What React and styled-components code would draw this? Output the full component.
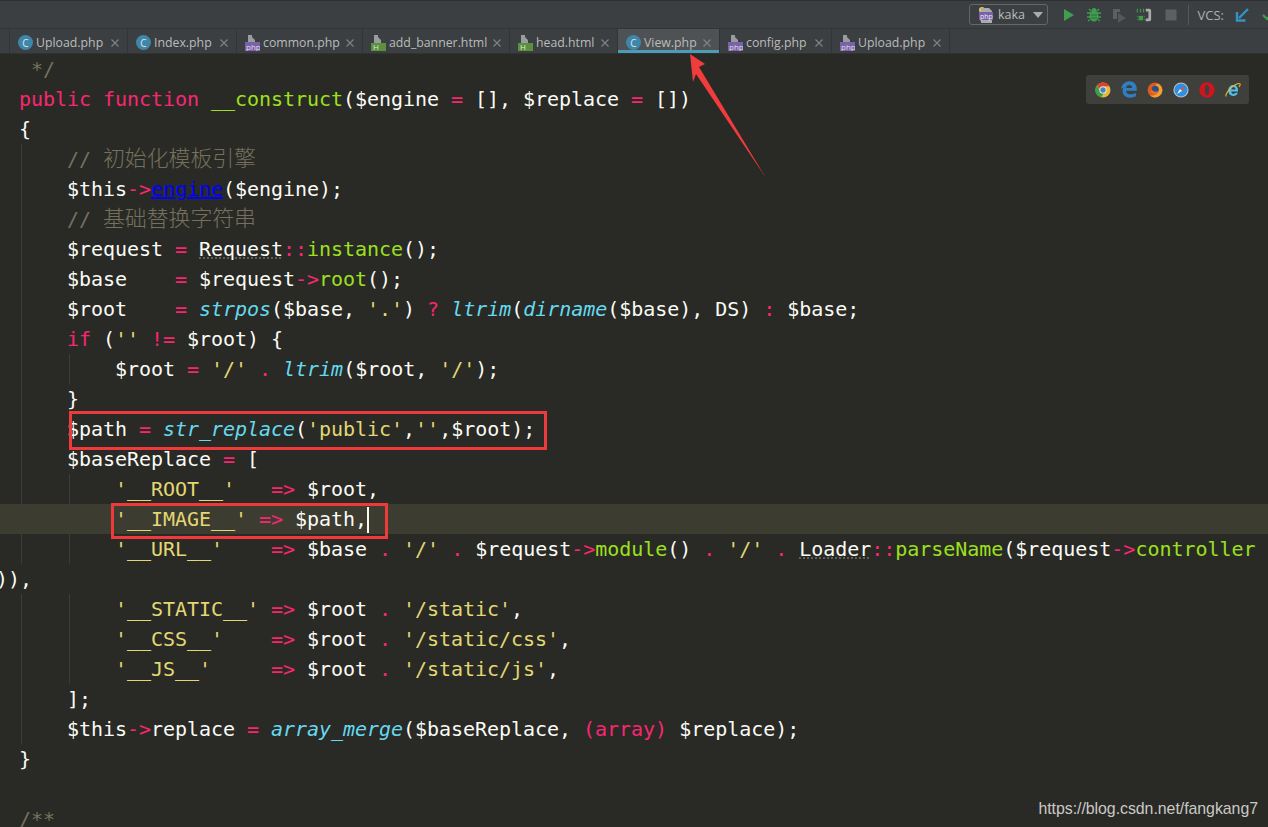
import React from "react";
import styled, { createGlobalStyle } from "styled-components";

const Global = createGlobalStyle`
  html, body { margin: 0; padding: 0; background: #292a25; }
  #root { width: 1268px; height: 827px; overflow: hidden; }
`;

const Page = styled.div`
  width: 1268px;
  height: 827px;
  display: flex;
  flex-direction: column;
  overflow: hidden;
  background: #292a25;
  font-family: "Open Sans", "Noto Sans", sans-serif;
`;

const Toolbar = styled.div`
  height: 29px;
  flex: none;
  box-sizing: border-box;
  border-top: 1px solid #2d2e30;
  background: #3c3f41;
  display: flex;
  align-items: center;
  justify-content: flex-end;
  border-bottom: 1px solid #333537;
`;

const RunConfig = styled.div`
  width: 79px;
  height: 21px;
  box-sizing: border-box;
  border: 1px solid #646669;
  border-radius: 3px;
  display: flex;
  align-items: center;
  padding-left: 7px;
  gap: 3px;
  color: #bbbbbb;
  font-size: 12.5px;
  margin-right: 9px;
`;

const Caret = styled.span`
  width: 0;
  height: 0;
  margin-left: 5px;
  border-left: 5px solid transparent;
  border-right: 5px solid transparent;
  border-top: 6px solid #a9abad;
`;

const ToolIcon = styled.span`
  width: 16px;
  height: 16px;
  margin: 0 ${(p) => p.$gap ?? 5}px;
  display: flex;
  flex: none;
`;

const Separator = styled.span`
  width: 1px;
  height: 20px;
  background: #55585a;
  margin: 0 9px 0 2.5px;
`;

const VcsLabel = styled.span`
  color: #a9b0b5;
  font-size: 13px;
  margin-right: 9px;
`;

const Overflowing = styled.span`
  display: flex;
  margin-right: -9px;
  margin-left: 10px;
  width: 16px;
`;

const TabBar = styled.div`
  height: 25px;
  flex: none;
  box-sizing: border-box;
  background: #3c3f41;
  padding-left: 9px;
  display: flex;
  border-bottom: 1px solid #323232;
`;

const Tab = styled.div`
  width: ${(p) => p.$w}px;
  box-sizing: border-box;
  flex: none;
  position: relative;
  display: flex;
  align-items: center;
  padding: 3px 8px 0 8px;
  border-left: 1px solid #323436;
  color: #bbbbbb;
  font-size: 12.3px;
  background: ${(p) => (p.$active ? "#4e5254" : "transparent")};
  &:last-child { border-right: 1px solid #323436; }
  ${(p) => p.$active && "box-shadow: inset 0 -3px 0 #4a9cb8;"}
`;

const TabName = styled.span`
  flex: 1;
  white-space: nowrap;
  margin-left: 3px;
`;

const Close = styled.span`
  width: 8px;
  height: 8px;
  display: flex;
  flex: none;
`;

const ClassBadge = styled.span`
  width: 15px;
  height: 15px;
  border-radius: 50%;
  background: #3f86a8;
  color: #d5e6ee;
  font-size: 10px;
  display: flex;
  align-items: center;
  justify-content: center;
  flex: none;
`;

const FileIcon = styled.span`
  width: 15px;
  height: 16px;
  flex: none;
  display: flex;
`;

const Editor = styled.div`
  flex: 1;
  position: relative;
  overflow: hidden;
  font-family: "DejaVu Sans Mono", monospace;
  font-size: 20px;
  letter-spacing: -0.04px;
  color: #fbfbf6;
`;

const guideImages = (g) => {
  const at = g || [];
  if (!at.length) return "none";
  return at
    .map(() => "linear-gradient(#3b3c37, #3b3c37)")
    .join(",");
};

const Line = styled.div`
  height: 30px;
  line-height: 30px;
  box-sizing: border-box;
  padding-left: ${(p) => p.$x ?? 19}px;
  margin-left: ${(p) => p.$shift ?? 0}px;
  white-space: pre;
  background-color: ${(p) => (p.$hl ? "#3c3c31" : "transparent")};
  background-image: ${(p) => guideImages(p.$guides)};
  background-repeat: no-repeat;
  background-size: 1px 100%;
  background-position: ${(p) => (p.$guides || []).map((x) => `${x}px 0`).join(",") || "0 0"};
`;

const palette = {
  kw: "#f92672",
  fn: "#9ce01e",
  call: "#66d9ef",
  str: "#e3d774",
  com: "#75715e",
};

const Tok = styled.span`
  color: ${(p) => palette[p.$k] || "inherit"};
  font-style: ${(p) => (p.$k === "call" ? "italic" : "normal")};
`;

const Link = styled.span`
  color: #0000ff;
  text-decoration: underline;
`;

const Weak = styled.span`
  text-decoration: underline dotted #5f5f58;
`;

const Cjk = styled.span`
  font-family: "Noto Sans CJK SC", sans-serif;
  font-size: 22px;
  font-weight: 300;
  line-height: 20px;
  letter-spacing: -0.15px;
`;

const Caretbar = styled.span`
  display: inline-block;
  width: 2px;
  height: 26px;
  background: #f8f8f2;
  vertical-align: -7px;
`;

const RedBox = styled.div`
  position: absolute;
  box-sizing: border-box;
  border: 3px solid #ee3a3a;
  left: ${(p) => p.$l}px;
  top: ${(p) => p.$t}px;
  width: ${(p) => p.$w}px;
  height: ${(p) => p.$h}px;
`;

const BrowserPanel = styled.div`
  position: absolute;
  left: 1086px;
  top: 21px;
  width: 163px;
  height: 29px;
  background: #3f3f3c;
  border-radius: 3px;
  display: flex;
  align-items: center;
  gap: 10px;
  padding-left: 9px;
  box-sizing: border-box;
`;

const ArrowLayer = styled.svg`
  position: absolute;
  left: 680px;
  top: 0;
  overflow: visible;
`;

const Watermark = styled.div`
  position: absolute;
  right: 10px;
  top: 746px;
  font-family: "Liberation Sans", sans-serif;
  font-size: 15.9px;
  color: #c9c9c6;
`;

const PhpFile = () => (
  <FileIcon>
    <svg width="15" height="16" viewBox="0 0 15 16">
      <path d="M3 0h4v7H3zM7 2l3 3v2H7z" fill="#9a9da0" />
      <rect x="0" y="7" width="15" height="9" fill="#7a62a8" />
      <text x="1" y="14.5" fontSize="8" fill="#e2dcef" fontFamily="Open Sans">php</text>
    </svg>
  </FileIcon>
);

const HtmlFile = () => (
  <FileIcon>
    <svg width="15" height="16" viewBox="0 0 15 16">
      <path d="M3 0h4v8H3zM7 2l3 3v3H7z" fill="#9a9da0" />
      <rect x="0" y="8" width="15" height="8" fill="#5c8f3e" />
      <text x="2" y="15" fontSize="8" fill="#dff0d0" fontFamily="Open Sans">H</text>
    </svg>
  </FileIcon>
);

const ClassFile = () => <ClassBadge>C</ClassBadge>;

const CloseX = () => (
  <Close>
    <svg width="8" height="8" viewBox="0 0 8 8">
      <path d="M0.5 .5l7 7M7.5 .5l-7 7" stroke="#7f8284" strokeWidth="1.2" />
    </svg>
  </Close>
);

const tabs = [
  ["Upload.php", 118, ClassFile],
  ["Index.php", 109, ClassFile],
  ["common.php", 126, PhpFile],
  ["add_banner.html", 147, HtmlFile],
  ["head.html", 108, HtmlFile],
  ["View.php", 102, ClassFile, true],
  ["config.php", 112, PhpFile],
  ["Upload.php", 119, PhpFile],
];

const Chrome = () => (
  <svg width="16" height="16" viewBox="0 0 16 16">
    <circle cx="8" cy="8" r="7.5" fill="#e8b93a" />
    <path d="M8 .5a7.5 7.5 0 0 1 6.5 3.75H8A3.75 3.75 0 0 0 4.4 7L2 3A7.5 7.5 0 0 1 8 .5z" fill="#d8432f" />
    <path d="M2 3l3 6a3.75 3.75 0 0 0 3.6 2.7L6 15.3A7.5 7.5 0 0 1 2 3z" fill="#3f9e4a" />
    <circle cx="8" cy="8" r="3.6" fill="#f2f2f2" />
    <circle cx="8" cy="8" r="2.7" fill="#4a80c8" />
  </svg>
);

const EdgeLogo = () => (
  <svg width="16" height="17" viewBox="0 0 16 17">
    <path d="M.2 8C.6 3.500 4.300.3 8.500.3c4.500 0 7.300 3.200 7.300 8v1.400H5c.2 2.600 2.300 3.600 4.500 3.600 1.900 0 3.800-.5 5.400-1.400v3.400c-1.500.9-3.600 1.400-5.800 1.400C4.400 16.700 1.600 13.700 1.600 10c0-1.500.5-3 1.800-4.300C2.200 6.500 1 7.400.2 8zM5.100 7h6c0-1.900-1-3-2.900-3C6.500 4 5.300 5.200 5.100 7z" fill="#2f7fc4" />
  </svg>
);

const Firefox = () => (
  <svg width="16" height="16" viewBox="0 0 16 16">
    <circle cx="8" cy="8" r="7.400" fill="#dc5a1e" />
    <path d="M15.400 8A7.400 7.400 0 0 1 3 13.400C7 14 11 12 11.500 8.500 11.800 6 10 4 8 3.600 9 2 11 1.500 12.500 2.500A7.400 7.400 0 0 1 15.400 8z" fill="#f0a22c" />
    <circle cx="8.200" cy="7.300" r="3.500" fill="#2b4f8c" />
    <path d="M4.800 7c.6 2.500 3.500 3.500 6 2-1 2.500-3.500 3.500-5.500 2.500S3.800 8.500 4.800 7z" fill="#e8741e" />
  </svg>
);

const Safari = () => (
  <svg width="16" height="16" viewBox="0 0 16 16">
    <circle cx="8" cy="8" r="7.600" fill="#b9bec3" />
    <circle cx="8" cy="8" r="6.500" fill="#2f8fe0" />
    <path d="M12 4L9 9 7 7z" fill="#ee4b3c" />
    <path d="M4 12l3-5 2 2z" fill="#f1f3f5" />
  </svg>
);

const Opera = () => (
  <svg width="16" height="16" viewBox="0 0 16 16">
    <path fillRule="evenodd" d="M8 .3C12.300.3 15.600 3.700 15.600 8S12.300 15.700 8 15.700.4 12.300.4 8 3.700.3 8 .3zM8 2.600C6.600 2.600 5.800 5 5.800 8s.8 5.400 2.200 5.400 2.200-2.400 2.200-5.400S9.400 2.600 8 2.600z" fill="#d3131f" />
  </svg>
);

const IE = () => (
  <svg width="16" height="16" viewBox="0 0 16 16">
    <path d="M3.200 8.200C3.400 5 5.500 3 8.300 3c2.900 0 4.700 2 4.700 5.200v1.200H6.200c.2 1.600 1.100 2.500 2.400 2.500 1 0 1.600-.4 2-1.200h2.300c-.6 2-2.200 3.200-4.400 3.200-3.100 0-5.300-2.200-5.300-5.700zM6.300 7.400h4.300C10.500 6 9.600 5 8.400 5S6.500 6 6.300 7.400z" fill="#4fc3ee" />
    <path d="M1 14.500C.2 12.500 4 6.500 9 3.500c2.800-1.700 5.300-2.500 6-1.700.5.600 0 1.800-1 3" fill="none" stroke="#e6b82e" strokeWidth="1.100" />
  </svg>
);

const A = ({ children }) => <Tok $k="kw">{children}</Tok>;
const F = ({ children }) => <Tok $k="fn">{children}</Tok>;
const C = ({ children }) => <Tok $k="call">{children}</Tok>;
const S = ({ children }) => <Tok $k="str">{children}</Tok>;
const M = ({ children }) => <Tok $k="com">{children}</Tok>;

const G1 = [21];
const G2 = [21, 69];

export default function App() {
  return (
    <Page>
      <Global />
      <Toolbar>
        <RunConfig>
          <svg width="18" height="18" viewBox="0 0 18 18">
            <circle cx="5" cy="4" r="3" fill="#e9c65a" />
            <path d="M4 2h8l3 3v12H4z" fill="#a9abad" />
            <rect x="2" y="6" width="14" height="8" fill="#7a62a8" />
            <text x="3" y="12.500" fontSize="7" fill="#ece8f4" fontFamily="Open Sans">php</text>
          </svg>
          kaka
          <Caret />
        </RunConfig>
        <ToolIcon $gap={4}>
          <svg width="16" height="16" viewBox="0 0 16 16"><path d="M3 2l10 6-10 6z" fill="#3f9d4f" /></svg>
        </ToolIcon>
        <ToolIcon $gap={4.500}>
          <svg width="16" height="16" viewBox="0 0 16 16">
            <ellipse cx="8" cy="9" rx="4.500" ry="5.500" fill="#3f9d4f" />
            <circle cx="8" cy="3.500" r="2.500" fill="#3f9d4f" />
            <path d="M1 6h14M1 10h14M2 14l2-1.500M14 14l-2-1.500M3 2l2 2M13 2l-2 2" stroke="#3f9d4f" strokeWidth="1.300" />
            <path d="M5 8h6M5 11h6" stroke="#2f6e3a" strokeWidth="1" />
          </svg>
        </ToolIcon>
        <ToolIcon $gap={4.500}>
          <svg width="16" height="16" viewBox="0 0 16 16">
            <path d="M2 2h7v3H6v7H2z" fill="#5c6062" />
            <path d="M7 6l8 5-8 5z" fill="#55585a" />
          </svg>
        </ToolIcon>
        <ToolIcon $gap={5}>
          <svg width="18" height="16" viewBox="0 0 18 16">
            <path d="M11 1h4a2 2 0 0 1 2 2v10a2 2 0 0 1-2 2h-4v-3h3V4h-3z" fill="#a9abad" />
            <path d="M2 1c-1 1-1 3 0 4M5.500 1c-1 1-1 3 0 4M9 1c-1 1-1 3 0 4" fill="none" stroke="#3f9d4f" strokeWidth="1.200" />
            <rect x="3" y="9" width="5" height="5" fill="#3f9d4f" />
            <path d="M1 10h9M1 13h9" stroke="#3f9d4f" strokeWidth="1" strokeDasharray="1 1" />
          </svg>
        </ToolIcon>
        <ToolIcon $gap={6}>
          <svg width="16" height="16" viewBox="0 0 16 16"><rect x="2.500" y="2.500" width="11" height="11" fill="#5c6062" /></svg>
        </ToolIcon>
        <Separator />
        <VcsLabel>VCS:</VcsLabel>
        <ToolIcon $gap={1}>
          <svg width="16" height="16" viewBox="0 0 16 16">
            <path d="M14 2L5 11M3 5v8.500h8.500" fill="none" stroke="#3592c4" strokeWidth="2.400" />
          </svg>
        </ToolIcon>
        <Overflowing>
          <svg width="16" height="16" viewBox="0 0 16 16">
            <path d="M2 8l4 4 7-8" fill="none" stroke="#3f9d4f" strokeWidth="2.200" />
          </svg>
        </Overflowing>
      </Toolbar>

      <TabBar>
        {tabs.map(([name, w, Icon, active], i) => (
          <Tab key={i} $w={w} $active={active}>
            <Icon />
            <TabName>{name}</TabName>
            <CloseX />
          </Tab>
        ))}
      </TabBar>

      <Editor>
        <Line $x={31}><M>*/</M></Line>
        <Line><A>public function</A> <F>__construct</F>($engine <A>=</A> [], $replace <A>=</A> [])</Line>
        <Line>{"{"}</Line>
        <Line $guides={G1} $x={67}><M>// <Cjk>初始化模板引擎</Cjk></M></Line>
        <Line $guides={G1} $x={67}>$this<A>-&gt;</A><Link>engine</Link>($engine);</Line>
        <Line $guides={G1} $x={67}><M>// <Cjk>基础替换字符串</Cjk></M></Line>
        <Line $guides={G1} $x={67}>$request <A>=</A> <Weak>Request</Weak><A>::</A><F>instance</F>();</Line>
        <Line $guides={G1} $x={67}>$base    <A>=</A> $request<A>-&gt;</A><F>root</F>();</Line>
        <Line $guides={G1} $x={67}>$root    <A>=</A> <C>strpos</C>($base, <S>'.'</S>) <A>?</A> <C>ltrim</C>(<C>dirname</C>($base), DS) <A>:</A> $base;</Line>
        <Line $guides={G1} $x={67}><A>if</A> (<S>''</S> <A>!=</A> $root) {"{"}</Line>
        <Line $guides={G2} $x={115}>$root <A>=</A> <S>'/'</S> <A>.</A> <C>ltrim</C>($root, <S>'/'</S>);</Line>
        <Line $guides={G1} $x={67}>{"}"}</Line>
        <Line $guides={G1} $x={67}>$path <A>=</A> <C>str_replace</C>(<S>'public'</S>,<S>''</S>,$root);</Line>
        <Line $guides={G1} $x={67}>$baseReplace <A>=</A> [</Line>
        <Line $guides={G2} $x={115}><S>'__ROOT__'</S>   <A>=&gt;</A> $root,</Line>
        <Line $guides={G2} $x={115} $hl><S>'__IMAGE__'</S> <A>=&gt;</A> $path,<Caretbar /></Line>
        <Line $guides={G2} $x={115}><S>'__URL__'</S>    <A>=&gt;</A> $base <A>.</A> <S>'/'</S> <A>.</A> $request<A>-&gt;</A><F>module</F>() <A>.</A> <S>'/'</S> <A>.</A> <Weak>Loader</Weak><A>::</A><F>parseName</F>($request<A>-&gt;</A><F>controller</F></Line>
        <Line $x={0} $shift={-4}>)),</Line>
        <Line $guides={G2} $x={115}><S>'__STATIC__'</S> <A>=&gt;</A> $root <A>.</A> <S>'/static'</S>,</Line>
        <Line $guides={G2} $x={115}><S>'__CSS__'</S>    <A>=&gt;</A> $root <A>.</A> <S>'/static/css'</S>,</Line>
        <Line $guides={G2} $x={115}><S>'__JS__'</S>     <A>=&gt;</A> $root <A>.</A> <S>'/static/js'</S>,</Line>
        <Line $guides={G1} $x={67}>];</Line>
        <Line $guides={G1} $x={67}>$this<A>-&gt;</A>replace <A>=</A> <C>array_merge</C>($baseReplace, <A>(array)</A> $replace);</Line>
        <Line>{"}"}</Line>
        <Line />
        <Line><M>/**</M></Line>

        <RedBox $l={69} $t={357} $w={478} $h={39} />
        <RedBox $l={111} $t={449} $w={277} $h={36} />

        <BrowserPanel>
          <Chrome />
          <EdgeLogo />
          <Firefox />
          <Safari />
          <Opera />
          <IE />
        </BrowserPanel>

        <ArrowLayer width="100" height="130" viewBox="680 54 100 130">
          <polygon points="690,54 705,64 699,67 766,178 696,74 693,82" fill="#f03c3c" />
        </ArrowLayer>

        <Watermark>https://blog.csdn.net/fangkang7</Watermark>
      </Editor>
    </Page>
  );
}
